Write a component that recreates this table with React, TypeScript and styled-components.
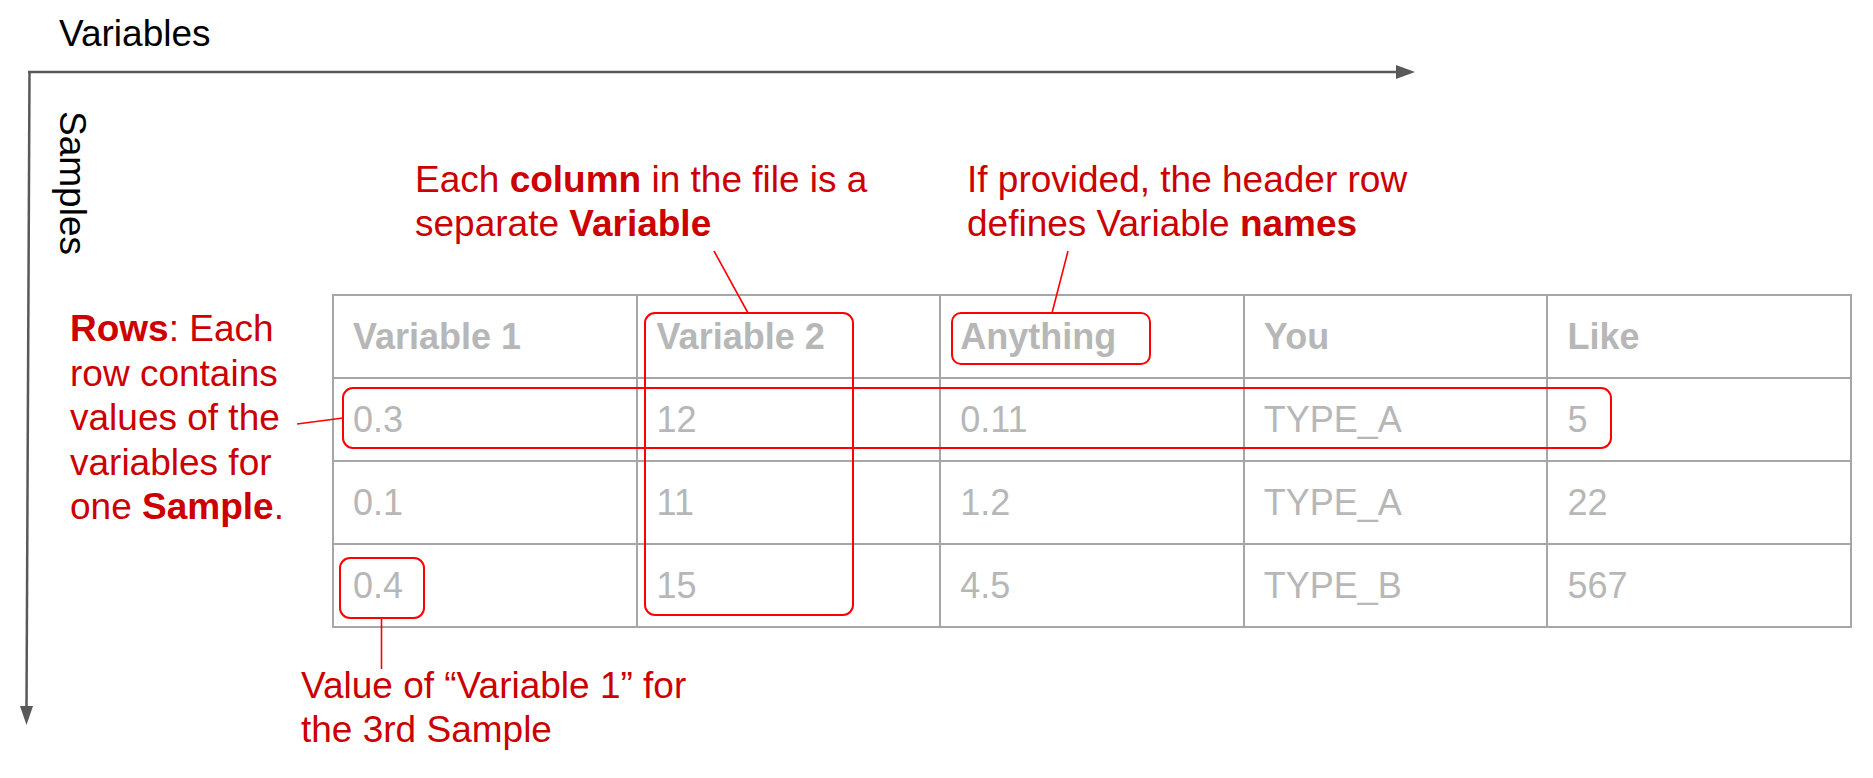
import React from "react";
import styled, { createGlobalStyle } from "styled-components";

const Global = createGlobalStyle`
  html, body {
    margin: 0;
    padding: 0;
    background: #ffffff;
  }
  body {
    font-family: "Liberation Sans", Arial, sans-serif;
  }
`;

const Page = styled.div`
  position: relative;
  width: 1873px;
  height: 778px;
  overflow: hidden;
  background: #ffffff;
  font-family: "Liberation Sans", Arial, sans-serif;
  font-size: 37px;
  line-height: 44px;
  color: #000000;
`;

const Diagram = styled.div`
  display: grid;
  grid-template-columns: 332px 1520px;
  grid-template-rows: 56px 238px 334px auto;
`;

const AxisTitle = styled.div`
  grid-column: 1 / -1;
  grid-row: 1;
  padding: 12px 0 0 59px;
`;

const VerticalLabel = styled.div`
  grid-column: 1;
  grid-row: 2;
  writing-mode: vertical-rl;
  align-self: start;
  justify-self: start;
  margin: 55px 0 0 50px;
  width: 44px;
`;

const TopNotes = styled.div`
  grid-column: 2;
  grid-row: 2;
  display: flex;
  align-items: flex-start;
  padding: 102px 0 0 83px;
`;

const Note = styled.div<{ $width?: number; $lh?: number }>`
  color: #cc0000;
  width: ${(p) => (p.$width ? `${p.$width}px` : "auto")};
  line-height: ${(p) => (p.$lh ? `${p.$lh}px` : "44px")};
  white-space: nowrap;
  b {
    font-weight: 700;
  }
`;

const SideNote = styled(Note)`
  grid-column: 1;
  grid-row: 3;
  padding: 13px 0 0 70px;
`;

const BottomNote = styled(Note)`
  grid-column: 1 / -1;
  grid-row: 4;
  padding: 36px 0 0 301px;
`;

const Table = styled.div`
  grid-column: 2;
  grid-row: 3;
  display: grid;
  grid-template-columns: repeat(5, 1fr);
  box-sizing: border-box;
  width: 1520px;
  border-top: 2px solid #a6a6a6;
  border-left: 2px solid #a6a6a6;
  align-self: start;
  font-size: 36px;
`;

const Cell = styled.div<{ $head?: boolean }>`
  box-sizing: border-box;
  height: 83px;
  display: flex;
  align-items: center;
  padding-left: 19px;
  border-right: 2px solid #a6a6a6;
  border-bottom: 2px solid #a6a6a6;
  color: #b7b7b7;
  font-weight: ${(p) => (p.$head ? 700 : 400)};
`;

const Overlay = styled.svg`
  position: absolute;
  left: 0;
  top: 0;
  width: 1873px;
  height: 778px;
  pointer-events: none;
`;

const header = ["Variable 1", "Variable 2", "Anything", "You", "Like"];
const rows = [
  ["0.3", "12", "0.11", "TYPE_A", "5"],
  ["0.1", "11", "1.2", "TYPE_A", "22"],
  ["0.4", "15", "4.5", "TYPE_B", "567"],
];

const AXIS = "#595959";
const RED = "#ff0000";

export default function App() {
  return (
    <>
      <Global />
      <Page>
        <Diagram>
          <AxisTitle>Variables</AxisTitle>
          <VerticalLabel>Samples</VerticalLabel>
          <TopNotes>
            <Note $width={552}>
              Each <b>column</b> in the file is a
              <br />
              separate <b>Variable</b>
            </Note>
            <Note>
              If provided, the header row
              <br />
              defines Variable <b>names</b>
            </Note>
          </TopNotes>
          <SideNote $lh={44.5}>
            <b>Rows</b>: Each
            <br />
            row contains
            <br />
            values of the
            <br />
            variables for
            <br />
            one <b>Sample</b>.
          </SideNote>
          <Table>
            {header.map((h) => (
              <Cell key={h} $head>
                {h}
              </Cell>
            ))}
            {rows.map((r, i) =>
              r.map((v, j) => <Cell key={`${i}-${j}`}>{v}</Cell>)
            )}
          </Table>
          <BottomNote>
            Value of “Variable 1” for
            <br />
            the 3rd Sample
          </BottomNote>
        </Diagram>

        <Overlay viewBox="0 0 1873 778">
          {/* axes */}
          <line x1="28" y1="72" x2="1398" y2="72" stroke={AXIS} strokeWidth="2.5" />
          <polygon points="1396,65 1415,72 1396,79" fill={AXIS} />
          <line x1="29.5" y1="71" x2="26.5" y2="708" stroke={AXIS} strokeWidth="2.5" />
          <polygon points="20,706 26.5,725 33,706" fill={AXIS} />

          {/* callout boxes */}
          <rect x="645" y="313" width="208" height="302" rx="10" fill="none" stroke={RED} strokeWidth="2" />
          <rect x="952" y="313" width="198" height="51" rx="9" fill="none" stroke={RED} strokeWidth="2" />
          <rect x="343" y="388" width="1268" height="60" rx="10" fill="none" stroke={RED} strokeWidth="2" />
          <rect x="340" y="558" width="84" height="60" rx="10" fill="none" stroke={RED} strokeWidth="2" />

          {/* leader lines */}
          <line x1="714" y1="251" x2="748" y2="313" stroke={RED} strokeWidth="1.6" />
          <line x1="1068" y1="251" x2="1052" y2="313" stroke={RED} strokeWidth="1.6" />
          <line x1="297" y1="424" x2="343" y2="418" stroke={RED} strokeWidth="1.6" />
          <line x1="381.5" y1="618" x2="381.5" y2="669" stroke={RED} strokeWidth="1.6" />
        </Overlay>
      </Page>
    </>
  );
}
